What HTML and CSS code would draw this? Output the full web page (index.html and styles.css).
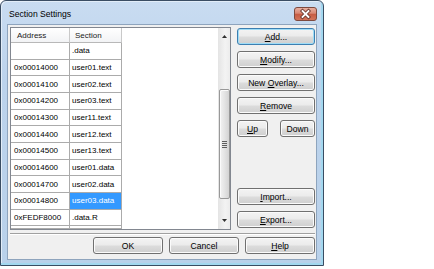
FILE: index.html
```html
<!DOCTYPE html>
<html>
<head>
<meta charset="utf-8">
<link rel="stylesheet" href="styles.css">
</head>
<body>
<div class="window">
  <div class="titlebar">
    <span class="title">Section Settings</span>
    <div class="close">
      <svg width="23" height="14" viewBox="0 0 23 14">
        <defs>
          <linearGradient id="cg" x1="0" y1="0" x2="0" y2="1">
            <stop offset="0" stop-color="#eab3a4"/>
            <stop offset="0.45" stop-color="#d88672"/>
            <stop offset="0.5" stop-color="#c65a42"/>
            <stop offset="1" stop-color="#d4765c"/>
          </linearGradient>
        </defs>
        <rect x="0.5" y="0.5" width="22" height="13" rx="2.5" fill="url(#cg)" stroke="#7d4a3f"/>
        <path d="M8.5 4 L14.5 10 M14.5 4 L8.5 10" stroke="#6b3a30" stroke-width="3.6" stroke-linecap="square"/>
        <path d="M8.5 4 L14.5 10 M14.5 4 L8.5 10" stroke="#ffffff" stroke-width="1.8" stroke-linecap="square"/>
      </svg>
    </div>
  </div>
  <div class="client">
    <div class="main">
      <div class="list">
        <div class="grid">
          <div class="hdr">Address</div><div class="hdr hdr2">Section</div>
          <div class="cell"></div><div class="cell c2">.data</div>
          <div class="cell">0x00014000</div><div class="cell c2">user01.text</div>
          <div class="cell">0x00014100</div><div class="cell c2">user02.text</div>
          <div class="cell">0x00014200</div><div class="cell c2">user03.text</div>
          <div class="cell">0x00014300</div><div class="cell c2">user11.text</div>
          <div class="cell">0x00014400</div><div class="cell c2">user12.text</div>
          <div class="cell">0x00014500</div><div class="cell c2">user13.text</div>
          <div class="cell">0x00014600</div><div class="cell c2">user01.data</div>
          <div class="cell">0x00014700</div><div class="cell c2">user02.data</div>
          <div class="cell">0x00014800</div><div class="cell c2 sel">user03.data</div>
          <div class="cell">0xFEDF8000</div><div class="cell c2">.data.R</div>
          <div class="cell"></div><div class="cell c2"></div>
        </div>
        <div class="vscroll">
          <div class="sbtn">
            <svg width="5" height="3" viewBox="0 0 5 3"><path d="M0 3 L2.5 0 L5 3 Z" fill="#303030"/></svg>
          </div>
          <div class="track1"></div>
          <div class="thumb">
            <svg width="5" height="7" viewBox="0 0 5 7">
              <path d="M0 0.5 H5 M0 2.5 H5 M0 4.5 H5 M0 6.5 H5" stroke="#5d5d5d" stroke-width="1"/>
            </svg>
          </div>
          <div class="track2"></div>
          <div class="sbtn">
            <svg width="5" height="3" viewBox="0 0 5 3"><path d="M0 0 L5 0 L2.5 3 Z" fill="#303030"/></svg>
          </div>
        </div>
      </div>
      <div class="side">
        <div class="btn default"><span><u>A</u>dd...</span></div>
        <div class="btn"><span><u>M</u>odify...</span></div>
        <div class="btn"><span>New <u>O</u>verlay...</span></div>
        <div class="btn"><span><u>R</u>emove</span></div>
        <div class="updown">
          <div class="btn up"><span><u>U</u>p</span></div>
          <div class="btn down"><span>Down</span></div>
        </div>
        <div class="spacer"></div>
        <div class="btn"><span><u>I</u>mport...</span></div>
        <div class="btn"><span><u>E</u>xport...</span></div>
      </div>
    </div>
    <div class="sep"></div>
    <div class="bottom">
      <div class="btn wide"><span>OK</span></div>
      <div class="btn wide"><span>Cancel</span></div>
      <div class="btn wide"><span><u>H</u>elp</span></div>
    </div>
  </div>
</div>
</body>
</html>
```
FILE: styles.css
```css
* { box-sizing: border-box; }
body {
  margin: 0;
  background: #ffffff;
  font-family: "Liberation Sans", Arial, sans-serif;
  color: #000;
}
.window {
  width: 324px;
  height: 266px;
  border: 1px solid #3a4d63;
  border-radius: 6px 6px 0 0;
  background: linear-gradient(to bottom, #c9dcf1 0%, #bcd3ec 30%, #b9d1ea 100%);
  box-shadow: inset -2px -2px 0 #a3d8ef, inset 1px 1px 0 #e2edf8;
  display: flex;
  flex-direction: column;
}
.titlebar {
  height: 23px;
  display: flex;
  align-items: flex-start;
}
.title {
  font-size: 8.6px;
  line-height: 10px;
  margin: 8px 0 0 8px;
  color: #000;
}
.close {
  margin: 6px 6px 0 auto;
  width: 23px;
  height: 14px;
  display: flex;
}
.client {
  margin: 0 6px 5px 6px;
  border: 1px solid #8ea4bd;
  background: #f0f0f0;
  flex: 1;
  display: flex;
  flex-direction: column;
  padding: 2px 1px 5px 2px;
}
.main {
  display: flex;
  gap: 6px;
  height: 203px;
}
.list {
  width: 221px;
  border: 1px solid #828790;
  background: #ffffff;
  display: flex;
}
.grid {
  flex: 1;
  display: grid;
  grid-template-columns: 59px 52px;
  grid-template-rows: 15px repeat(11, 16.667px) 1fr;
  overflow: hidden;
}
.hdr {
  font-size: 8px;
  display: flex;
  align-items: center;
  padding-left: 6px;
  background: linear-gradient(to bottom, #ffffff, #f2f3f5);
  border-right: 1px solid #c9c9c9;
  border-bottom: 1px solid #b8b8b8;
  color: #1a1a1a;
}
.hdr2 { padding-left: 5px; }
.cell {
  font-size: 8px;
  display: flex;
  align-items: center;
  padding-left: 3px;
  border-right: 1px solid #ababab;
  border-bottom: 1px solid #ababab;
  white-space: nowrap;
}
.c2 { padding-left: 2px; }
.sel {
  background: #3399ff;
  color: #ffffff;
}
.vscroll {
  width: 12px;
  display: flex;
  flex-direction: column;
  background: linear-gradient(to right, #e4e4e4, #f3f3f3 60%, #ececec);
}
.sbtn {
  height: 17px;
  display: flex;
  align-items: center;
  justify-content: center;
}
.track1 { height: 44px; }
.thumb {
  height: 110px;
  margin-left: 1px;
  border: 1px solid #989898;
  border-radius: 2px;
  background: linear-gradient(to right, #f3f3f3, #e4e4e4 50%, #d3d3d3);
  box-shadow: inset 1px 1px 0 #fbfbfb;
  display: flex;
  align-items: center;
  justify-content: center;
}
.track2 { flex: 1; }
.side {
  width: 78px;
  display: flex;
  flex-direction: column;
  gap: 6px;
  padding: 1px 0 2px 0;
}
.spacer { flex: 1; }
.btn {
  height: 17px;
  border: 1px solid #707070;
  border-radius: 3px;
  background: linear-gradient(to bottom, #f3f3f3 0%, #ebebeb 48%, #dcdcdc 52%, #cfcfcf 100%);
  box-shadow: inset 0 0 0 1px #fbfbfb;
  font-size: 8.6px;
  display: flex;
  align-items: center;
  justify-content: center;
  color: #000;
  white-space: nowrap;
}
.btn u { text-decoration-thickness: 1px; text-underline-offset: 1px; }
.default {
  border-color: #3c7fb1;
  box-shadow: inset 0 0 0 1px #9fdcf6;
}
.updown {
  display: flex;
  justify-content: space-between;
}
.up { width: 31px; }
.down { width: 35px; }
.sep {
  height: 2px;
  border-top: 1px solid #a0a0a0;
  border-bottom: 1px solid #ffffff;
  margin-top: 3px;
}
.bottom {
  display: flex;
  justify-content: flex-end;
  gap: 6px;
  margin-top: 2px;
}
.wide { width: 70px; }
```
